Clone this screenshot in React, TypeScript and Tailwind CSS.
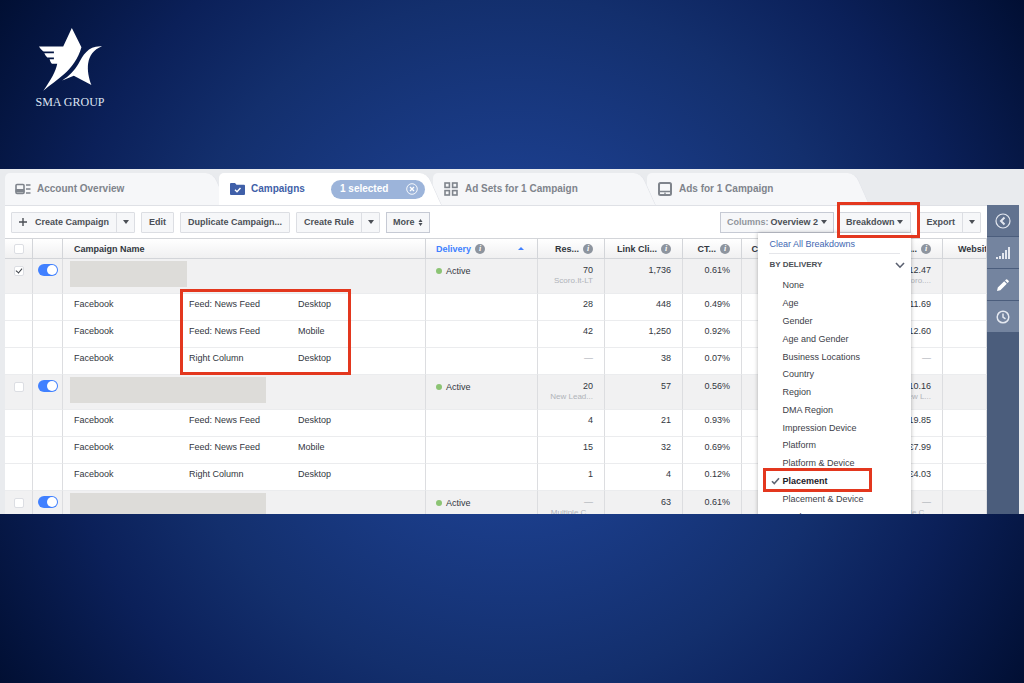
import type { ReactNode } from 'react'

const groups = [
  {
    checked: true,
    thumb: 'w-[117px]',
    metrics: ['70', '1,736', '0.61%', '€12.47'],
    goal: 'Scoro.It-LT',
    costGoal: 'Scoro....',
    rows: [
      ['Feed: News Feed', 'Desktop', '28', '448', '0.49%', '€11.69'],
      ['Feed: News Feed', 'Mobile', '42', '1,250', '0.92%', '€12.60'],
      ['Right Column', 'Desktop', '—', '38', '0.07%', '—'],
    ],
  },
  {
    checked: false,
    thumb: 'w-[196px]',
    metrics: ['20', '57', '0.56%', '€10.16'],
    goal: 'New Lead...',
    costGoal: 'New L...',
    rows: [
      ['Feed: News Feed', 'Desktop', '4', '21', '0.93%', '€19.85'],
      ['Feed: News Feed', 'Mobile', '15', '32', '0.69%', '€7.99'],
      ['Right Column', 'Desktop', '1', '4', '0.12%', '€4.03'],
    ],
  },
  {
    checked: false,
    thumb: 'w-[196px]',
    metrics: ['—', '63', '0.61%', '—'],
    goal: 'Multiple C...',
    costGoal: 'Multiple C...',
    rows: [],
  },
]

const breakdowns = [
  'None',
  'Age',
  'Gender',
  'Age and Gender',
  'Business Locations',
  'Country',
  'Region',
  'DMA Region',
  'Impression Device',
  'Platform',
  'Platform & Device',
  'Placement',
  'Placement & Device',
  'Product ID',
]

function Logo() {
  return (
    <div className="flex w-[74px] flex-col items-center">
      <svg viewBox="110 82 196 194" className="h-[65px] w-[65px] fill-white" aria-hidden="true">
        <path d="M113 140H186L212 84L241 142C232 175 210 205 190 222C170 240 148 255 126 273C150 240 163 215 168 192H152C148 187 146 182 145 178H158V173H138C134 169 131 164 129 160H158V155H127C121 151 117 146 113 140Z" />
        <path d="M303 139C262 136 246 165 232 192C220 213 202 231 183 242L218 228L271 256C256 215 250 160 303 139Z" />
      </svg>
      <span className="mt-[3px] font-['Liberation_Serif',serif] text-[12px] leading-[14px] whitespace-nowrap text-[#dfe5f2]">SMA GROUP</span>
    </div>
  )
}

function Caret() {
  return (
    <svg viewBox="0 0 6 4" className="h-1 w-1.5 shrink-0 fill-current" aria-hidden="true">
      <path d="M0 0H6L3 4Z" />
    </svg>
  )
}

function InfoIcon() {
  return (
    <span className="flex size-[10px] shrink-0 items-center justify-center rounded-full bg-[#8d949e] font-['Liberation_Serif',serif] text-[8px] leading-[8px] font-bold text-white italic">
      i
    </span>
  )
}

function ToolButton({ children, menu }: { children: ReactNode; menu?: string }) {
  return (
    <div className="flex h-[21px] shrink-0 rounded-[1px] border border-[#dcdee3] bg-[#f6f7f9]">
      <button className="flex items-center gap-2 px-[7px]">{children}</button>
      {menu && (
        <button aria-label={menu} className="flex w-[18px] items-center justify-center border-l border-[#dcdee3]">
          <Caret />
        </button>
      )}
    </div>
  )
}

function Tab({ icon, label, look, children }: { icon: ReactNode; label: string; look: string; children?: ReactNode }) {
  return (
    <div className={`relative isolate -mr-[9px] flex h-8 w-[223px] shrink-0 items-center pl-[10px] ${look}`}>
      {/* Forma de la pestaña */}
      <span className="absolute inset-y-0 right-8 left-0 -z-10 rounded-tl-[5px] bg-(--tab)" />
      <span className="absolute inset-y-0 right-0 -z-10 w-12 origin-bottom skew-x-[24deg] rounded-tr-[8px] border-r border-[#e3e5ea] bg-(--tab)" />
      <button className="flex items-center gap-[6px]">
        <span className="flex w-4 justify-center">{icon}</span>
        {label}
      </button>
      {children}
    </div>
  )
}

function Tabs() {
  return (
    <nav className="flex px-[5px] pt-1 text-[10px] leading-3 font-bold">
      <Tab
        label="Account Overview"
        look="z-0 text-[#7f848c] [--tab:#f6f7f9]"
        icon={
          <svg viewBox="0 0 16 12" className="h-3 w-4" fill="none" stroke="currentColor" aria-hidden="true">
            <rect x="1" y="1.5" width="8" height="9" rx="1" strokeWidth="1.6" />
            <path d="M1 6.5H9V9H1Z" fill="currentColor" />
            <path d="M11 2H15.5M11 6H15.5M11 10H15.5" strokeWidth="1.5" />
          </svg>
        }
      />
      <Tab
        label="Campaigns"
        look="z-30 text-[#3f5fa8] [--tab:#ffffff]"
        icon={
          <svg viewBox="0 0 15 12" className="h-3 w-[15px]" aria-hidden="true">
            <path d="M0 1Q0 0 1 0H5L6.5 1.8H14Q15 1.8 15 2.8V11Q15 12 14 12H1Q0 12 0 11Z" fill="#3f5fa8" />
            <path d="M5 6.8L7 8.7L10.5 5" fill="none" stroke="#fff" strokeWidth="1.4" />
          </svg>
        }
      >
        <span className="mr-[17px] ml-auto flex h-[19px] w-[94px] items-center justify-between rounded-full bg-[#9cb4da] pr-[7px] pl-[9px] text-white">
          1 selected
          <button aria-label="Clear selection">
            <svg viewBox="0 0 12 12" className="size-3" fill="none" stroke="currentColor" aria-hidden="true">
              <circle cx="6" cy="6" r="5.3" strokeWidth="0.9" />
              <path d="M4 4L8 8M8 4L4 8" strokeWidth="1.3" />
            </svg>
          </button>
        </span>
      </Tab>
      <Tab
        label="Ad Sets for 1 Campaign"
        look="z-20 text-[#7f848c] [--tab:#f6f7f9]"
        icon={
          <svg viewBox="0 0 14 14" className="size-[14px]" fill="none" stroke="currentColor" strokeWidth="1.6" aria-hidden="true">
            <rect x="1" y="1" width="4.4" height="4.4" />
            <rect x="8.6" y="1" width="4.4" height="4.4" />
            <rect x="1" y="8.6" width="4.4" height="4.4" />
            <rect x="8.6" y="8.6" width="4.4" height="4.4" />
          </svg>
        }
      />
      <Tab
        label="Ads for 1 Campaign"
        look="z-10 text-[#7f848c] [--tab:#f6f7f9]"
        icon={
          <svg viewBox="0 0 14 14" className="size-[14px]" fill="none" stroke="currentColor" strokeWidth="2" aria-hidden="true">
            <rect x="1" y="1" width="12" height="12" rx="1.5" />
            <path d="M1 9.5H13" strokeWidth="1.5" />
            <path d="M6 11.2H8" strokeWidth="1" />
          </svg>
        }
      />
    </nav>
  )
}

function BreakdownMenu() {
  return (
    <div className="absolute top-full right-0 z-20 w-[153px] bg-white px-[11px] pt-[5px] text-[9px] leading-3 font-normal text-[#3c4048] shadow-[0_0_4px_rgba(0,0,0,0.3)]">
      <a href="#clear" className="block border-b border-[#e5e6ea] pb-[3px] text-[#4267b2]">
        Clear All Breakdowns
      </a>
      <div className="flex h-[23px] items-center justify-between text-[8px] font-bold text-[#4b4f56]">
        BY DELIVERY
        <svg viewBox="0 0 10 7" className="-mr-[5px] h-[7px] w-[10px]" fill="none" stroke="#5a6070" strokeWidth="1.6" aria-hidden="true">
          <path d="M1 1L5 5.2L9 1" />
        </svg>
      </div>
      <ul className="grid h-[249px] auto-rows-fr">
        {breakdowns.map((name) => (
          <li key={name} className="relative flex items-center pl-[13px]">
            {name === 'Placement' ? (
              <>
                <svg viewBox="0 0 9 8" className="absolute left-[2px] h-2 w-[9px]" fill="none" stroke="#5f6673" strokeWidth="1.6" aria-hidden="true">
                  <path d="M1 4.2L3.3 6.6L8 1.2" />
                </svg>
                <button className="font-bold text-[#1d2129]">{name}</button>
                <span className="absolute -top-1 -bottom-[2px] -left-[6px] w-[109px] border-[3px] border-[#e3371e]" />
              </>
            ) : (
              <button className="whitespace-nowrap">{name}</button>
            )}
          </li>
        ))}
      </ul>
    </div>
  )
}

function Toolbar() {
  return (
    <div className="flex h-8 items-center gap-[6px] px-[6px] text-[9px] leading-3 font-bold whitespace-nowrap text-[#4b4f56]">
      <ToolButton menu="More create options">
        <svg viewBox="0 0 8 8" className="size-2" stroke="currentColor" strokeWidth="1.4" aria-hidden="true">
          <path d="M4 0V8M0 4H8" />
        </svg>
        Create Campaign
      </ToolButton>
      <ToolButton>Edit</ToolButton>
      <ToolButton>Duplicate Campaign...</ToolButton>
      <ToolButton menu="More rule options">Create Rule</ToolButton>
      <button className="flex h-[21px] items-center gap-[3px] border border-[#c6cad4] bg-[#f6f7f9] px-[6px]">
        More
        <svg viewBox="0 0 5 7" className="h-[7px] w-[5px] fill-current" aria-hidden="true">
          <path d="M0.5 3L2.5 0L4.5 3ZM0.5 4L2.5 7L4.5 4Z" />
        </svg>
      </button>

      <div className="ml-auto flex gap-1">
        <button className="flex h-[21px] items-center border border-[#c6cad4] bg-[#f6f7f9] px-[6px]">
          <span className="mr-[2px] text-[#90949c]">Columns:</span>
          <span className="mr-[3px]">Overview 2</span>
          <Caret />
        </button>
        <div className="relative mr-[3px]">
          <button aria-expanded="true" className="flex h-[21px] items-center gap-[3px] border border-[#d3d6dd] bg-[#f6f7f9] px-[7px]">
            Breakdown
            <Caret />
          </button>
          <BreakdownMenu />
          <span className="absolute -top-[10px] -right-[9px] -bottom-[5px] -left-px z-30 border-[3px] border-[#e3371e]" />
        </div>
        <ToolButton menu="More export options">Export</ToolButton>
      </div>
    </div>
  )
}

const headCell = 'h-[21px] border-t border-r border-b border-[#d3d5d9] bg-linear-to-b from-white to-[#f0f0f1] font-bold'
const groupCell = 'h-[35px] border-r border-b border-r-[#dcdde0] border-b-[#ebecee] bg-[#f1f1f2] align-top'
const rowCell = 'h-[27px] border-r border-b border-r-[#dcdde0] border-b-[#ebecee] bg-white align-top'
const checkbox =
  "relative block size-[10px] mx-auto appearance-none rounded-[2px] border border-[#dcdee3] bg-white checked:before:absolute checked:before:top-0 checked:before:left-[2px] checked:before:h-[6px] checked:before:w-[4px] checked:before:rotate-40 checked:before:border-r checked:before:border-b checked:before:border-[#3c4048] checked:before:content-['']"
const toggle =
  "relative block h-3 w-5 mx-auto appearance-none rounded-full bg-[#b0b5bf] checked:bg-[#4080ff] before:absolute before:top-px before:right-px before:size-[10px] before:rounded-full before:bg-white before:content-['']"

function HeadMetric({ label }: { label: string }) {
  return (
    <th className={`${headCell} pr-[11px]`}>
      <span className="flex items-center justify-end gap-1">
        {label}
        <InfoIcon />
      </span>
    </th>
  )
}

function Metric({ value, note, base, pad }: { value: string; note?: string; base: string; pad: string }) {
  return (
    <td className={`${base} ${pad} pr-[11px] text-right`}>
      <span className={value === '—' ? 'block text-[#a5a9b0]' : 'block'}>{value}</span>
      {note && <span className="block text-[8px] leading-[9px] text-[#b0b3b9]">{note}</span>}
    </td>
  )
}

function CampaignTable() {
  return (
    <table className="w-full table-fixed border-separate border-spacing-0 text-[9px] leading-3 whitespace-nowrap text-[#32363e]">
      <colgroup>
        <col className="w-[28px]" />
        <col className="w-[30px]" />
        <col />
        <col className="w-[112px]" />
        <col className="w-[67px]" />
        <col className="w-[78px]" />
        <col className="w-[59px]" />
        <col className="w-[60px]" />
        <col className="w-[141px]" />
        <col className="w-[44px]" />
      </colgroup>
      <thead>
        <tr>
          <th className={headCell}>
            <input type="checkbox" aria-label="Select all campaigns" className={checkbox} />
          </th>
          <th className={headCell} />
          <th className={`${headCell} pl-[11px] text-left`}>Campaign Name</th>
          <th className={`${headCell} pr-[13px] pl-[10px] text-[#4080ff]`}>
            <span className="flex items-center gap-1">
              Delivery
              <InfoIcon />
              <svg viewBox="0 0 6 3" className="ml-auto h-[3px] w-1.5 fill-current" aria-hidden="true">
                <path d="M0 3L3 0L6 3Z" />
              </svg>
            </span>
          </th>
          <HeadMetric label="Res..." />
          <HeadMetric label="Link Cli..." />
          <HeadMetric label="CT..." />
          <HeadMetric label="Cos..." />
          <HeadMetric label="Cost ..." />
          <th className={`${headCell} overflow-hidden pl-[15px] text-left`}>Website</th>
        </tr>
      </thead>
      {groups.map((group, g) => (
        <tbody key={g}>
          <tr>
            <td className={`${groupCell} pt-[7px]`}>
              <input type="checkbox" aria-label={`Select campaign ${g + 1}`} defaultChecked={group.checked} className={checkbox} />
            </td>
            <td className={`${groupCell} pt-[5px]`}>
              <input type="checkbox" role="switch" aria-label={`Campaign ${g + 1} on`} defaultChecked className={toggle} />
            </td>
            <td className={`${groupCell} pt-[2px] pl-[7px]`}>
              <div className={`h-[26px] bg-[#dddcd9] ${group.thumb}`} />
            </td>
            <td className={`${groupCell} pt-[6px] pl-[10px]`}>
              <span className="flex items-center gap-1">
                <span className="size-[6px] rounded-full bg-[#8cc474]" />
                Active
              </span>
            </td>
            <Metric value={group.metrics[0]} note={group.goal} base={groupCell} pad="pt-[5px]" />
            <Metric value={group.metrics[1]} base={groupCell} pad="pt-[5px]" />
            <Metric value={group.metrics[2]} base={groupCell} pad="pt-[5px]" />
            <td className={groupCell} />
            <Metric value={group.metrics[3]} note={group.costGoal} base={groupCell} pad="pt-[5px]" />
            <td className={groupCell} />
          </tr>
          {group.rows.map(([placement, device, results, clicks, ctr, cost], r) => (
            <tr key={r}>
              <td className={rowCell} />
              <td className={rowCell} />
              <td className={`${rowCell} pt-1 pl-[11px]`}>
                <div className="relative grid grid-cols-[115px_109px_1fr]">
                  <span>Facebook</span>
                  <span>{placement}</span>
                  <span>{device}</span>
                  {g === 0 && r === 0 && (
                    <span className="absolute -top-[9px] left-[106px] h-[86px] w-[171px] border-[3px] border-[#e3371e]" />
                  )}
                </div>
              </td>
              <td className={rowCell} />
              <Metric value={results} base={rowCell} pad="pt-1" />
              <Metric value={clicks} base={rowCell} pad="pt-1" />
              <Metric value={ctr} base={rowCell} pad="pt-1" />
              <td className={rowCell} />
              <Metric value={cost} base={rowCell} pad="pt-1" />
              <td className={rowCell} />
            </tr>
          ))}
        </tbody>
      ))}
    </table>
  )
}

function SideRail() {
  return (
    <aside className="flex w-8 shrink-0 flex-col gap-px bg-[#4b5d7c] text-[#e4e8f0]">
      <button aria-label="Collapse" className="flex h-[31px] items-center justify-center bg-[#61728f]">
        <svg viewBox="0 0 16 16" className="size-4" fill="none" stroke="currentColor" aria-hidden="true">
          <circle cx="8" cy="8" r="7" strokeWidth="1.2" />
          <path d="M9.5 4.5L6 8L9.5 11.5" strokeWidth="2" />
        </svg>
      </button>
      <button aria-label="Charts" className="flex h-[31px] items-center justify-center bg-[#74849f]">
        <svg viewBox="0 0 14 12" className="h-3 w-[14px] fill-current" aria-hidden="true">
          <path d="M0 10H2V12H0ZM3 9H5V12H3ZM6 6H8V12H6ZM9 3H11V12H9ZM12 0H14V12H12Z" />
        </svg>
      </button>
      <button aria-label="Edit" className="flex h-[31px] items-center justify-center bg-[#74849f]">
        <svg viewBox="0 0 12 12" className="size-3 fill-white" aria-hidden="true">
          <path d="M0 12L0.8 8.6L7.2 2.2L9.8 4.8L3.4 11.2ZM8 1.4L9 0.4Q9.6 -0.1 10.2 0.4L11.6 1.8Q12.1 2.4 11.6 3L10.6 4Z" />
        </svg>
      </button>
      <button aria-label="History" className="flex h-[31px] items-center justify-center bg-[#74849f]">
        <svg viewBox="0 0 14 14" className="size-[14px]" fill="none" stroke="currentColor" strokeWidth="1.5" aria-hidden="true">
          <circle cx="7" cy="7" r="5.8" />
          <path d="M7 3.5V7L9.5 8.8" />
        </svg>
      </button>
    </aside>
  )
}

export default function App() {
  return (
    <main className="flex h-screen flex-col bg-[radial-gradient(circle_at_center,#1f4696_0%,#1b3d8a_28%,#132f6d_56%,#0b2059_75%,#010f33_100%)] font-['Liberation_Sans',Arial,sans-serif]">
      {/* Logo */}
      <header className="h-[169px] shrink-0 pt-[27px] pl-[33px]">
        <Logo />
      </header>

      {/* Panel de anuncios */}
      <section className="min-h-0 flex-1 overflow-hidden bg-[#e9ebee]">
        <Tabs />
        <div className="flex h-full px-[5px]">
          <div className="min-w-0 flex-1 border-t border-[#dfe1e6] bg-white">
            <Toolbar />
            <CampaignTable />
          </div>
          <SideRail />
        </div>
      </section>

      <footer className="h-[169px] shrink-0" />
    </main>
  )
}
